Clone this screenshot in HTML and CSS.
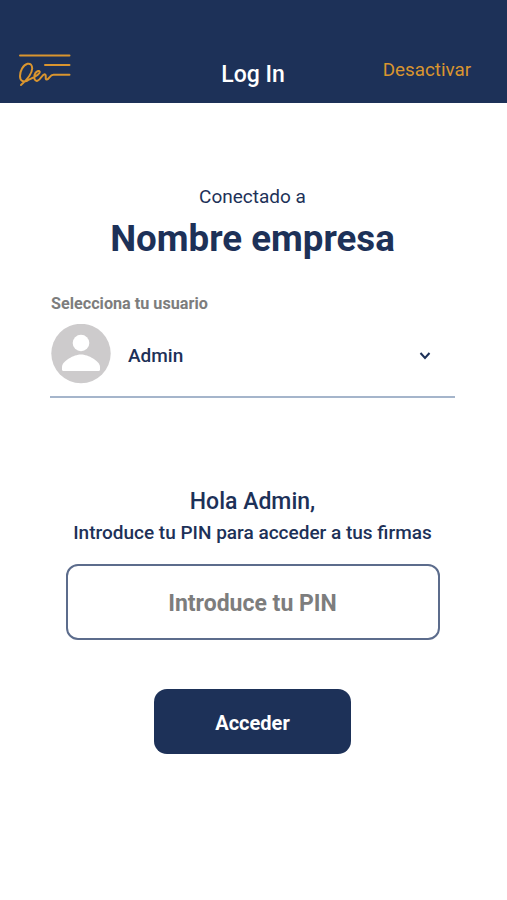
FILE: index.html
```
<!DOCTYPE html>
<html lang="es">
<head>
  <meta charset="UTF-8" />
  <title>Log In</title>
  <link rel="stylesheet" href="styles.css">
</head>
<body>
  <header class="header">
    <svg class="logo" width="54" height="36" viewBox="0 0 54 36">
      <path d="M2 3.500H51.500M27 13H51.500" />
      <path d="M3 33C7 29.500 14 22.500 14.200 16.500C14.200 13 12.500 11.300 9.500 11.800C5 13 2 19 2 24C2 29 5.500 30.500 9 28.800C13 26.500 22 23 21.800 20C21.500 18 17.500 19 16.500 23C15.800 27 17 29.300 19.500 28.800C22.500 28 24 22.500 26.500 22.200C29 22.200 26.500 27.800 28.800 27.600C31 27.200 32 22.700 35.500 22.700H51.500" />
    </svg>
    <h1>Log In</h1>
    <a class="desactivar">Desactivar</a>
  </header>

  <main class="contenido">
    <p class="conectado">Conectado a</p>
    <h2 class="empresa">Nombre empresa</h2>

    <!-- Selector de usuario -->
    <div class="selector">
      <div class="etiqueta">Selecciona tu usuario</div>
      <div class="usuario">
        <svg class="avatar" width="60" height="60" viewBox="0 0 60 60">
          <circle cx="30" cy="29.500" r="29.700" fill="#cdcbcc" />
          <circle cx="30" cy="19" r="8.300" fill="#fff" />
          <path d="M11 45.500V43C11 37 23 30.500 30 30.500S49 37 49 43V45.500Q49 47 47.500 47H12.500Q11 47 11 45.500Z" fill="#fff" />
        </svg>
        <span class="nombre">Admin</span>
        <svg class="flecha" width="12" height="10" viewBox="0 0 12 10">
          <path d="M1.500 2L6 7L10.500 2" />
        </svg>
      </div>
    </div>

    <!-- Acceso con PIN -->
    <form class="acceso">
      <p class="hola">Hola Admin,</p>
      <p class="texto">Introduce tu PIN para acceder a tus firmas</p>
      <input class="pin" type="text" placeholder="Introduce tu PIN">
      <button type="button">Acceder</button>
    </form>
  </main>
</body>
</html>
```
FILE: styles.css
```
* {
  box-sizing: border-box;
}

body {
  margin: 0;
  font-family: Roboto, sans-serif;
  color: #1d3158;
  background-color: #fff;
}

h1, h2, p {
  margin: 0;
}

.header {
  display: grid;
  grid-template-columns: 1fr auto 1fr;
  height: 103px;
  padding: 52px 36px 0 18px;
  background-color: #1d3158;
}

.logo {
  fill: none;
  stroke: #d9952f;
  stroke-width: 2;
  stroke-linecap: round;
  stroke-linejoin: round;
}

.header h1 {
  margin: 10px 0 0 17px;
  font-size: 23px;
  font-weight: 500;
  line-height: 26px;
  color: #fff;
}

.desactivar {
  justify-self: end;
  margin-top: 7px;
  font-size: 18.8px;
  line-height: 22px;
  color: #d9952f;
}

.contenido {
  padding: 83px 52px 0 50px;
}

.conectado {
  font-size: 19px;
  line-height: 22px;
  text-align: center;
}

.empresa {
  margin-top: 9px;
  font-size: 36.7px;
  line-height: 44px;
  text-align: center;
}

.selector {
  margin-top: 33px;
  padding-bottom: 12px;
  border-bottom: 2px solid #a5b5cb;
}

.etiqueta {
  padding-left: 1px;
  font-size: 16.2px;
  font-weight: 700;
  line-height: 20px;
  color: #7d7d7d;
}

.usuario {
  display: flex;
  align-items: center;
  margin-top: 10px;
  padding: 0 24px 0 1px;
}

.nombre {
  margin: 3px 0 0 17px;
  font-size: 19px;
  font-weight: 500;
}

.flecha {
  margin: 4px 0 0 auto;
  fill: none;
  stroke: #1d3158;
  stroke-width: 2;
}

.acceso {
  display: flex;
  flex-direction: column;
  align-items: center;
  margin-top: 90px;
}

.hola {
  font-size: 23px;
  font-weight: 500;
  line-height: 28px;
}

.texto {
  margin-top: 6px;
  font-size: 19px;
  font-weight: 500;
  line-height: 22px;
}

.pin {
  width: 374px;
  height: 76px;
  margin-top: 20px;
  padding: 2px 0 0;
  border: 2px solid #5c6c8c;
  border-radius: 12px;
  font-family: inherit;
  font-size: 23px;
  font-weight: 700;
  text-align: center;
  background-color: #fff;
}

.pin::placeholder {
  color: #7d7d7d;
}

button {
  width: 197px;
  height: 65px;
  margin-top: 49px;
  padding: 2px 0 0;
  border: none;
  border-radius: 13px;
  font-family: inherit;
  font-size: 20px;
  font-weight: 700;
  color: #fff;
  background-color: #1d3158;
}
```
